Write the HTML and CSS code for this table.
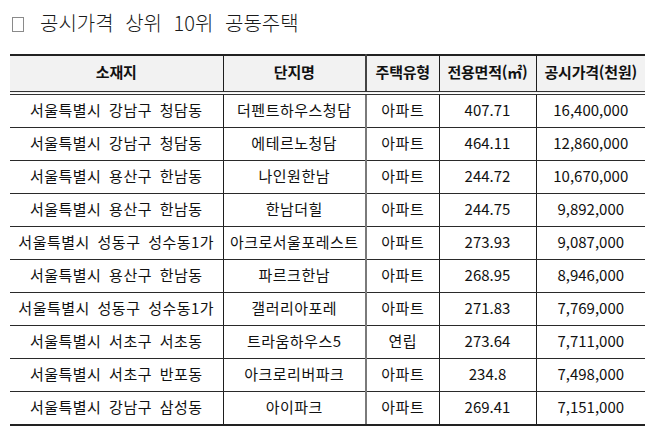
FILE: index.html
```html
<!DOCTYPE html>
<html lang="ko">
<head>
<meta charset="utf-8">
<link rel="stylesheet" href="styles.css">
</head>
<body>
<div class="page">
  <h1 class="title"><span class="box"></span><span class="title-text">공시가격 상위 10위 공동주택</span></h1>
  <table class="tbl">
    <colgroup>
      <col class="c1"><col class="c2"><col class="c3"><col class="c4"><col class="c5">
    </colgroup>
    <thead>
      <tr><th>소재지</th><th>단지명</th><th class="sep">주택유형</th><th>전용면적(㎡)</th><th>공시가격(천원)</th></tr>
    </thead>
    <tbody>
      <tr><td>서울특별시 강남구 청담동</td><td>더펜트하우스청담</td><td class="sep">아파트</td><td class="num">407.71</td><td class="num">16,400,000</td></tr>
      <tr><td>서울특별시 강남구 청담동</td><td>에테르노청담</td><td class="sep">아파트</td><td class="num">464.11</td><td class="num">12,860,000</td></tr>
      <tr><td>서울특별시 용산구 한남동</td><td>나인원한남</td><td class="sep">아파트</td><td class="num">244.72</td><td class="num">10,670,000</td></tr>
      <tr><td>서울특별시 용산구 한남동</td><td>한남더힐</td><td class="sep">아파트</td><td class="num">244.75</td><td class="num">9,892,000</td></tr>
      <tr><td>서울특별시 성동구 성수동1가</td><td>아크로서울포레스트</td><td class="sep">아파트</td><td class="num">273.93</td><td class="num">9,087,000</td></tr>
      <tr><td>서울특별시 용산구 한남동</td><td>파르크한남</td><td class="sep">아파트</td><td class="num">268.95</td><td class="num">8,946,000</td></tr>
      <tr><td>서울특별시 성동구 성수동1가</td><td>갤러리아포레</td><td class="sep">아파트</td><td class="num">271.83</td><td class="num">7,769,000</td></tr>
      <tr><td>서울특별시 서초구 서초동</td><td>트라움하우스5</td><td class="sep">연립</td><td class="num">273.64</td><td class="num">7,711,000</td></tr>
      <tr><td>서울특별시 서초구 반포동</td><td>아크로리버파크</td><td class="sep">아파트</td><td class="num">234.8</td><td class="num">7,498,000</td></tr>
      <tr><td>서울특별시 강남구 삼성동</td><td>아이파크</td><td class="sep">아파트</td><td class="num">269.41</td><td class="num">7,151,000</td></tr>
    </tbody>
  </table>
</div>
</body>
</html>
```

FILE: styles.css
```css
html, body {
  margin: 0;
  padding: 0;
  background: #ffffff;
}

body {
  font-family: "Noto Sans CJK KR", "Noto Sans", sans-serif;
  color: #111111;
}

.page {
  padding: 11px 0 0 10px;
}

.title {
  display: flex;
  align-items: center;
  margin: 0 0 19px 0;
  height: 24px;
  font-size: 20px;
  font-weight: 300;
  line-height: 24px;
  color: #1a1a1a;
}

.box {
  display: block;
  width: 10px;
  height: 13px;
  border: 1px solid #8a8a8a;
  margin: 2px 0 0 2px;
}

.title-text {
  margin-left: 16px;
  word-spacing: 6px;
}

.tbl {
  border-collapse: collapse;
  table-layout: fixed;
  width: 635px;
  font-size: 15px;
}

.c1 { width: 213px; }
.c2 { width: 143px; }
.c3 { width: 73px; }
.c4 { width: 97px; }
.c5 { width: 109px; }

.tbl th,
.tbl td {
  padding: 0 0 3px 0;
  text-align: center;
  white-space: nowrap;
  line-height: 20px;
  border-left: 1px solid #1e1e1e;
  border-bottom: 1px solid #2a2a2a;
}

.tbl th:first-child,
.tbl td:first-child {
  border-left: none;
}

.tbl thead tr {
  border-top: 2px solid #222222;
}

.tbl th {
  height: 32px;
  background: #f2f2f2;
  font-weight: 700;
  border-bottom: 4px double #333333;
  letter-spacing: -0.2px;
}

.tbl td {
  height: 29px;
  font-weight: 400;
  letter-spacing: 0.5px;
  word-spacing: 3px;
}

.tbl td.num {
  letter-spacing: 0;
}

.tbl td.sep {
  border-left: 2px solid #7a7a7a;
}

.tbl th.sep {
  border-left: 2px solid #444444;
}

.tbl tbody tr:last-child td {
  border-bottom: 2px solid #222222;
}
```
